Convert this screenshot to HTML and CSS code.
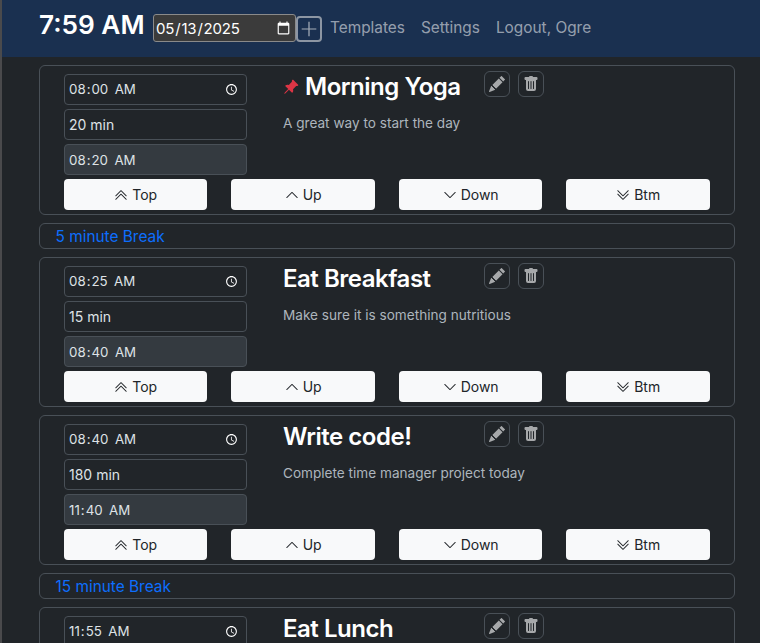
FILE: index.html
```html
<!DOCTYPE html>
<html>
<head>
  <title>Time Manager</title>
  <link rel="stylesheet" href="styles.css">
</head>
<body>
  <svg class="sprites" xmlns="http://www.w3.org/2000/svg">
    <symbol id="i-top" viewBox="0 0 16 16"><path d="M7.646 2.646a.5.5 0 0 1 .708 0l6 6a.5.5 0 0 1-.708.708L8 3.707 2.354 9.354a.5.5 0 1 1-.708-.708z"/><path d="M7.646 6.646a.5.5 0 0 1 .708 0l6 6a.5.5 0 0 1-.708.708L8 7.707l-5.646 5.647a.5.5 0 0 1-.708-.708z"/></symbol>
    <symbol id="i-up" viewBox="0 0 16 16"><path d="M7.646 4.646a.5.5 0 0 1 .708 0l6 6a.5.5 0 0 1-.708.708L8 5.707l-5.646 5.647a.5.5 0 0 1-.708-.708z"/></symbol>
    <symbol id="i-down" viewBox="0 0 16 16"><path d="M1.646 4.646a.5.5 0 0 1 .708 0L8 10.293l5.646-5.647a.5.5 0 0 1 .708.708l-6 6a.5.5 0 0 1-.708 0l-6-6a.5.5 0 0 1 0-.708"/></symbol>
    <symbol id="i-btm" viewBox="0 0 16 16"><path d="M1.646 6.646a.5.5 0 0 1 .708 0L8 12.293l5.646-5.647a.5.5 0 0 1 .708.708l-6 6a.5.5 0 0 1-.708 0l-6-6a.5.5 0 0 1 0-.708"/><path d="M1.646 2.646a.5.5 0 0 1 .708 0L8 8.293l5.646-5.647a.5.5 0 0 1 .708.708l-6 6a.5.5 0 0 1-.708 0l-6-6a.5.5 0 0 1 0-.708"/></symbol>
    <symbol id="i-edit" viewBox="0 0 16 16"><path d="M12.854.146a.5.5 0 0 0-.707 0L10.5 1.793 14.207 5.5l1.647-1.646a.5.5 0 0 0 0-.708zm.646 6.061L9.793 2.5 3.293 9H3.5a.5.5 0 0 1 .5.5v.5h.5a.5.5 0 0 1 .5.5v.5h.5a.5.5 0 0 1 .5.5v.5h.5a.5.5 0 0 1 .5.5v.207zm-7.468 7.468A.5.5 0 0 1 6 13.5V13h-.5a.5.5 0 0 1-.5-.5V12h-.5a.5.5 0 0 1-.5-.5V11h-.5a.5.5 0 0 1-.5-.5V10h-.5a.5.5 0 0 1-.175-.032l-.179.178a.5.5 0 0 0-.11.168l-2 5a.5.5 0 0 0 .65.65l5-2a.5.5 0 0 0 .168-.11z"/></symbol>
    <symbol id="i-trash" viewBox="0 0 16 16"><path d="M2.5 1a1 1 0 0 0-1 1v1a1 1 0 0 0 1 1H3v9a2 2 0 0 0 2 2h6a2 2 0 0 0 2-2V4h.5a1 1 0 0 0 1-1V2a1 1 0 0 0-1-1H10a1 1 0 0 0-1-1H7a1 1 0 0 0-1 1zm3 4a.5.5 0 0 1 .5.5v7a.5.5 0 0 1-1 0v-7a.5.5 0 0 1 .5-.5M8 5a.5.5 0 0 1 .5.5v7a.5.5 0 0 1-1 0v-7A.5.5 0 0 1 8 5m3 .5v7a.5.5 0 0 1-1 0v-7a.5.5 0 0 1 1 0"/></symbol>
  </svg>

  <header class="topbar">
    <span class="clock">7:59 AM</span>
    <input class="date-input" type="date" value="2025-05-13">
    <button class="add-btn" type="button" aria-label="Add">
      <svg viewBox="0 0 16 16" width="18" height="18"><path d="M8 1.5v13M1.5 8h13" stroke="currentColor" stroke-width="1.1" fill="none"/></svg>
    </button>
    <nav class="nav">
      <a href="#">Templates</a>
      <a href="#">Settings</a>
      <a href="#">Logout, Ogre</a>
    </nav>
  </header>

  <main class="schedule">
    <section class="task">
      <div class="task-top">
        <div class="times">
          <input class="field field-time" type="time" value="08:00">
          <input class="field" type="text" value="20 min">
          <input class="field field-time field-end" type="time" value="08:20" disabled>
        </div>
        <div class="info">
          <h2 class="title"><svg class="pin" viewBox="0 0 16 16" width="16" height="16"><path d="M9.828.722a.5.5 0 0 1 .354.146l4.95 4.95a.5.5 0 0 1 0 .707c-.48.48-1.072.588-1.503.588-.177 0-.335-.018-.46-.039l-3.134 3.134a6 6 0 0 1 .16 1.013c.046.702-.032 1.687-.72 2.375a.5.5 0 0 1-.707 0l-2.829-2.828-3.182 3.182c-.195.195-1.219.902-1.414.707s.512-1.22.707-1.414l3.182-3.182-2.828-2.829a.5.5 0 0 1 0-.707c.688-.688 1.673-.767 2.375-.72a6 6 0 0 1 1.013.16l3.134-3.133a3 3 0 0 1-.04-.461c0-.43.108-1.022.589-1.503a.5.5 0 0 1 .353-.146"/></svg>Morning Yoga</h2>
          <p class="desc">A great way to start the day</p>
        </div>
        <div class="actions">
          <button class="icon-btn" type="button"><svg><use href="#i-edit"/></svg></button>
          <button class="icon-btn" type="button"><svg><use href="#i-trash"/></svg></button>
        </div>
      </div>
      <div class="moves">
        <button class="move" type="button"><svg><use href="#i-top"/></svg>Top</button>
        <button class="move" type="button"><svg><use href="#i-up"/></svg>Up</button>
        <button class="move" type="button"><svg><use href="#i-down"/></svg>Down</button>
        <button class="move" type="button"><svg><use href="#i-btm"/></svg>Btm</button>
      </div>
    </section>

    <div class="break">5 minute Break</div>

    <section class="task">
      <div class="task-top">
        <div class="times">
          <input class="field field-time" type="time" value="08:25">
          <input class="field" type="text" value="15 min">
          <input class="field field-time field-end" type="time" value="08:40" disabled>
        </div>
        <div class="info">
          <h2 class="title">Eat Breakfast</h2>
          <p class="desc">Make sure it is something nutritious</p>
        </div>
        <div class="actions">
          <button class="icon-btn" type="button"><svg><use href="#i-edit"/></svg></button>
          <button class="icon-btn" type="button"><svg><use href="#i-trash"/></svg></button>
        </div>
      </div>
      <div class="moves">
        <button class="move" type="button"><svg><use href="#i-top"/></svg>Top</button>
        <button class="move" type="button"><svg><use href="#i-up"/></svg>Up</button>
        <button class="move" type="button"><svg><use href="#i-down"/></svg>Down</button>
        <button class="move" type="button"><svg><use href="#i-btm"/></svg>Btm</button>
      </div>
    </section>

    <section class="task">
      <div class="task-top">
        <div class="times">
          <input class="field field-time" type="time" value="08:40">
          <input class="field" type="text" value="180 min">
          <input class="field field-time field-end" type="time" value="11:40" disabled>
        </div>
        <div class="info">
          <h2 class="title">Write code!</h2>
          <p class="desc">Complete time manager project today</p>
        </div>
        <div class="actions">
          <button class="icon-btn" type="button"><svg><use href="#i-edit"/></svg></button>
          <button class="icon-btn" type="button"><svg><use href="#i-trash"/></svg></button>
        </div>
      </div>
      <div class="moves">
        <button class="move" type="button"><svg><use href="#i-top"/></svg>Top</button>
        <button class="move" type="button"><svg><use href="#i-up"/></svg>Up</button>
        <button class="move" type="button"><svg><use href="#i-down"/></svg>Down</button>
        <button class="move" type="button"><svg><use href="#i-btm"/></svg>Btm</button>
      </div>
    </section>

    <div class="break">15 minute Break</div>

    <section class="task">
      <div class="task-top">
        <div class="times">
          <input class="field field-time" type="time" value="11:55">
        </div>
        <div class="info">
          <h2 class="title">Eat Lunch</h2>
        </div>
        <div class="actions">
          <button class="icon-btn" type="button"><svg><use href="#i-edit"/></svg></button>
          <button class="icon-btn" type="button"><svg><use href="#i-trash"/></svg></button>
        </div>
      </div>
    </section>
  </main>
</body>
</html>
```

FILE: styles.css
```css
* {
  box-sizing: border-box;
}
html, body {
  height: 100%;
  overflow: hidden;
}
body {
  margin: 0;
  border-left: 2px solid #4a4a4c;
  background-color: #212529;
  color: #dee2e6;
  font-family: Inter, "Liberation Sans", sans-serif;
  font-size: 14px;
  color-scheme: dark;
}
.sprites {
  display: none;
}

.topbar {
  display: flex;
  align-items: center;
  height: 57px;
  padding-left: 37px;
  background-color: #1a3050;
}
.clock {
  width: 114px;
  margin-top: -8px;
  color: #fff;
  font-size: 26.2px;
  font-weight: 600;
}
.date-input {
  width: 143px;
  height: 28px;
  margin-top: -1px;
  padding: 0 2px 0 1px;
  border: 1px solid #8a8a8a;
  border-radius: 3px;
  background-color: #3b3b3b;
  color: #fff;
  font-family: inherit;
  font-size: 15px;
  letter-spacing: -.2px;
}
.add-btn {
  display: flex;
  align-items: center;
  justify-content: center;
  width: 26px;
  height: 26px;
  padding: 0;
  border: 2px solid #8d96a3;
  border-radius: 4px;
  background: none;
  color: #a6adb8;
}
.nav {
  display: flex;
  gap: 16px;
  margin: -2px 0 0 8px;
}
.nav a {
  color: rgba(255, 255, 255, .55);
  font-size: 15.4px;
  text-decoration: none;
}

.schedule {
  display: flex;
  flex-direction: column;
  gap: 8px;
  width: 696px;
  margin: 8px 0 0 37px;
}
.task {
  flex: none;
  height: 150px;
  padding: 8px 24px 4px;
  border: 1px solid #495057;
  border-radius: 6px;
}
.task-top {
  display: flex;
  height: 101px;
}
.times {
  display: flex;
  flex-direction: column;
  gap: 4px;
  width: 183px;
}
.field {
  width: 100%;
  height: 31px;
  padding: 0 4px;
  border: 1px solid #495057;
  border-radius: 4px;
  background-color: #212529;
  color: #dee2e6;
  font-family: inherit;
  font-size: 14px;
}
.field-time {
  padding-left: 3px;
  font-size: 13.3px;
}
.field-time::-webkit-datetime-edit-ampm-field {
  margin-left: 2px;
}
.field-end {
  background-color: #343a40;
}
.field-end::-webkit-calendar-picker-indicator {
  display: none;
}
.info {
  width: 201px;
  margin-left: 36px;
}
.title {
  display: flex;
  align-items: center;
  margin: -2px 0 0;
  color: #fff;
  font-size: 24px;
  font-weight: 600;
  line-height: 29px;
  letter-spacing: -.48px;
  white-space: nowrap;
}
.pin {
  margin-right: 6px;
  fill: #dc3545;
}
.desc {
  margin: 14px 0 0;
  color: #adb5bd;
  font-size: 13.6px;
  white-space: nowrap;
}
.actions {
  display: flex;
  gap: 8px;
  margin-top: -3px;
}
.icon-btn {
  display: flex;
  align-items: center;
  justify-content: center;
  width: 26px;
  height: 26px;
  padding: 0;
  border: 1px solid #495057;
  border-radius: 6px;
  background: none;
}
.icon-btn svg {
  width: 16px;
  height: 16px;
  fill: #a6a8aa;
}
.moves {
  display: grid;
  grid-template-columns: repeat(4, 1fr);
  gap: 24px;
  margin: 4px .1px 0 -.1px;
}
.move {
  display: flex;
  align-items: center;
  justify-content: center;
  gap: 4px;
  height: 31px;
  padding: 0;
  border: none;
  border-radius: 4px;
  background-color: #f8f9fa;
  color: #212529;
  font-family: inherit;
  font-size: 14px;
}
.move svg {
  width: 14px;
  height: 14px;
  fill: #212529;
}
.break {
  flex: none;
  height: 26px;
  padding-left: 15.5px;
  border: 1px solid #495057;
  border-radius: 6px;
  color: #0d6efd;
  font-size: 15.4px;
  line-height: 26px;
}
```
